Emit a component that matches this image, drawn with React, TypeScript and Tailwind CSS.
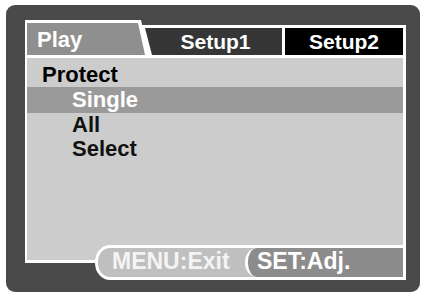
export default function App() {
  return (
    <div className="w-[421px] h-[296px] bg-white overflow-hidden font-['Liberation_Sans',Arial,sans-serif] font-bold">
      {/* camera LCD frame */}
      <div className="ml-[6px] mt-[5px] w-[414px] h-[287px] rounded-[9px] bg-[#4a4a4a] pl-[19px] pt-[15px]">
        <div className="w-[381px] flex flex-col">
          {/* tabs */}
          <div className="flex items-end h-[35px] text-[22px] text-white">
            <div className="relative z-10 w-[124px] h-[35px] bg-white pl-[2px] pt-[3px] [clip-path:polygon(0_0,116px_0,124px_100%,0_100%)]">
              <div className="h-[32px] w-[118px] bg-[#8f8f8f] flex items-center pl-[10px] [clip-path:polygon(0_0,111px_0,118px_100%,0_100%)]">
                Play
              </div>
            </div>
            <div className="-ml-[10px] flex-1 h-[30px] bg-white pt-[3px] pr-[3px] flex gap-[3px] text-[21px]">
              <div className="w-[143px] bg-[#363636] flex items-center justify-center pl-[10px] [clip-path:polygon(6px_0,100%_0,100%_100%,13px_100%)]">
                Setup1
              </div>
              <div className="flex-1 bg-black flex items-center justify-center">Setup2</div>
            </div>
          </div>

          {/* menu body */}
          <div className="bg-white pl-[2px] pr-[3px] pt-[3px]">
            <div className="bg-[#cccccc] h-[187px] pt-[5px] flex flex-col text-[22px]">
              <div className="pl-[15px] h-[24px] leading-[24px] text-black">Protect</div>
              <div className="pl-[45px] h-[26px] leading-[26px] bg-[#9a9a9a] text-white">Single</div>
              <div className="pl-[45px] h-[24px] leading-[24px] text-[#111]">All</div>
              <div className="pl-[45px] h-[24px] leading-[24px] text-[#111]">Select</div>
            </div>
          </div>

          {/* footer */}
          <div className="flex items-start">
            <div className="w-[85px] bg-white pl-[2px] pb-[3px]">
              <div className="h-[15px] bg-[#cccccc]" />
            </div>
            <div className="relative -ml-[15px] flex-1 h-[35px] bg-white rounded-l-[15px_17px] p-[3px] flex text-[23px] text-white">
              <div className="w-[160px] bg-[#bfbfbf] rounded-l-[12px_14px] pl-[14px] pb-[3px] flex items-center text-[#f4f4f4]">
                MENU:Exit
              </div>
              <div className="relative flex-1 -ml-[13px] bg-[#8c8c8c] border-l-[3px] border-white rounded-l-[12px_14px] pl-[9px] pb-[3px] flex items-center">
                SET:Adj.
              </div>
            </div>
          </div>
        </div>
      </div>
    </div>
  );
}
